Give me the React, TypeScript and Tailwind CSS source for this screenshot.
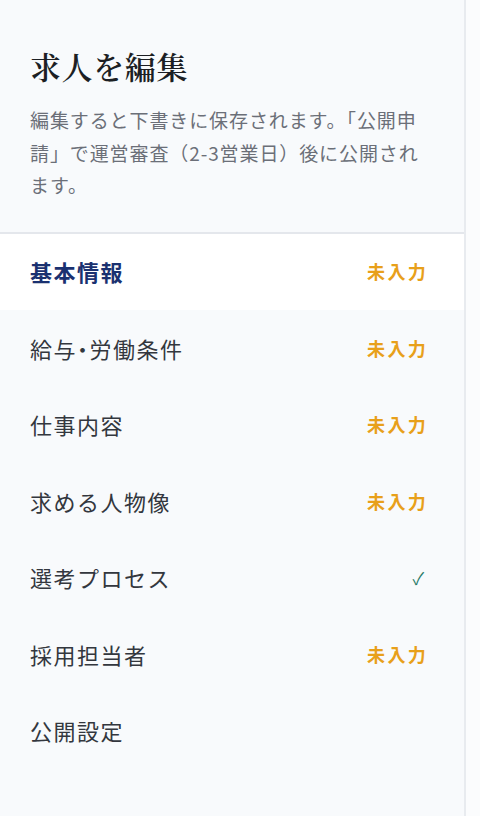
const sections = [
  { label: "基本情報", status: "todo", active: true },
  { label: "給与・労働条件", status: "todo" },
  { label: "仕事内容", status: "todo" },
  { label: "求める人物像", status: "todo" },
  { label: "選考プロセス", status: "done" },
  { label: "採用担当者", status: "todo" },
  { label: "公開設定", status: "none" },
]

export default function App() {
  return (
    <div
      className="flex min-h-[816px] w-[480px] bg-[#fbfcfd]"
      style={{ fontFamily: '"Noto Sans CJK JP", "Noto Sans", sans-serif' }}
    >
      <aside className="w-[466px] shrink-0 border-r-2 border-[#e8ebef] bg-[#f8fafc]">
        {/* Header */}
        <div className="border-b-2 border-[#e4e7ec] pl-[30px] pr-[34px] pt-[46px] pb-[30px]">
          <h1
            className="text-[31px] font-semibold leading-[40px] tracking-[0.6px] text-[#1c1f24]"
            style={{ fontFamily: '"Noto Serif CJK JP", "Liberation Serif", serif' }}
          >
            求人を編集
          </h1>
          <p className="mt-[18px] text-[19px] leading-[32.5px] tracking-[0.9px] text-[#6b6f78]">
            編集すると下書きに保存されます。「公開申請」で運営審査（2-3営業日）後に公開されます。
          </p>
        </div>

        {/* Section list */}
        <nav>
          {sections.map((s) => (
            <div
              key={s.label}
              className={
                s.active
                  ? "flex h-[76.5px] items-center justify-between bg-white pl-[30px] pr-[36px]"
                  : "flex h-[76.5px] items-center justify-between pl-[30px] pr-[36px]"
              }
            >
              <span
                className={
                  s.active
                    ? "text-[22px] font-bold tracking-[1.5px] text-[#1a3170] [font-feature-settings:'halt']"
                    : "text-[22px] tracking-[1.5px] text-[#33373e] [font-feature-settings:'halt']"
                }
              >
                {s.label}
              </span>
              {s.status === "todo" && (
                <span className="text-[18px] font-semibold tracking-[2.3px] text-[#e8a01a]">未入力</span>
              )}
              {s.status === "done" && (
                <span className="pr-[4px] text-[17px] text-[#287a68]">✓</span>
              )}
            </div>
          ))}
        </nav>
      </aside>
    </div>
  )
}
